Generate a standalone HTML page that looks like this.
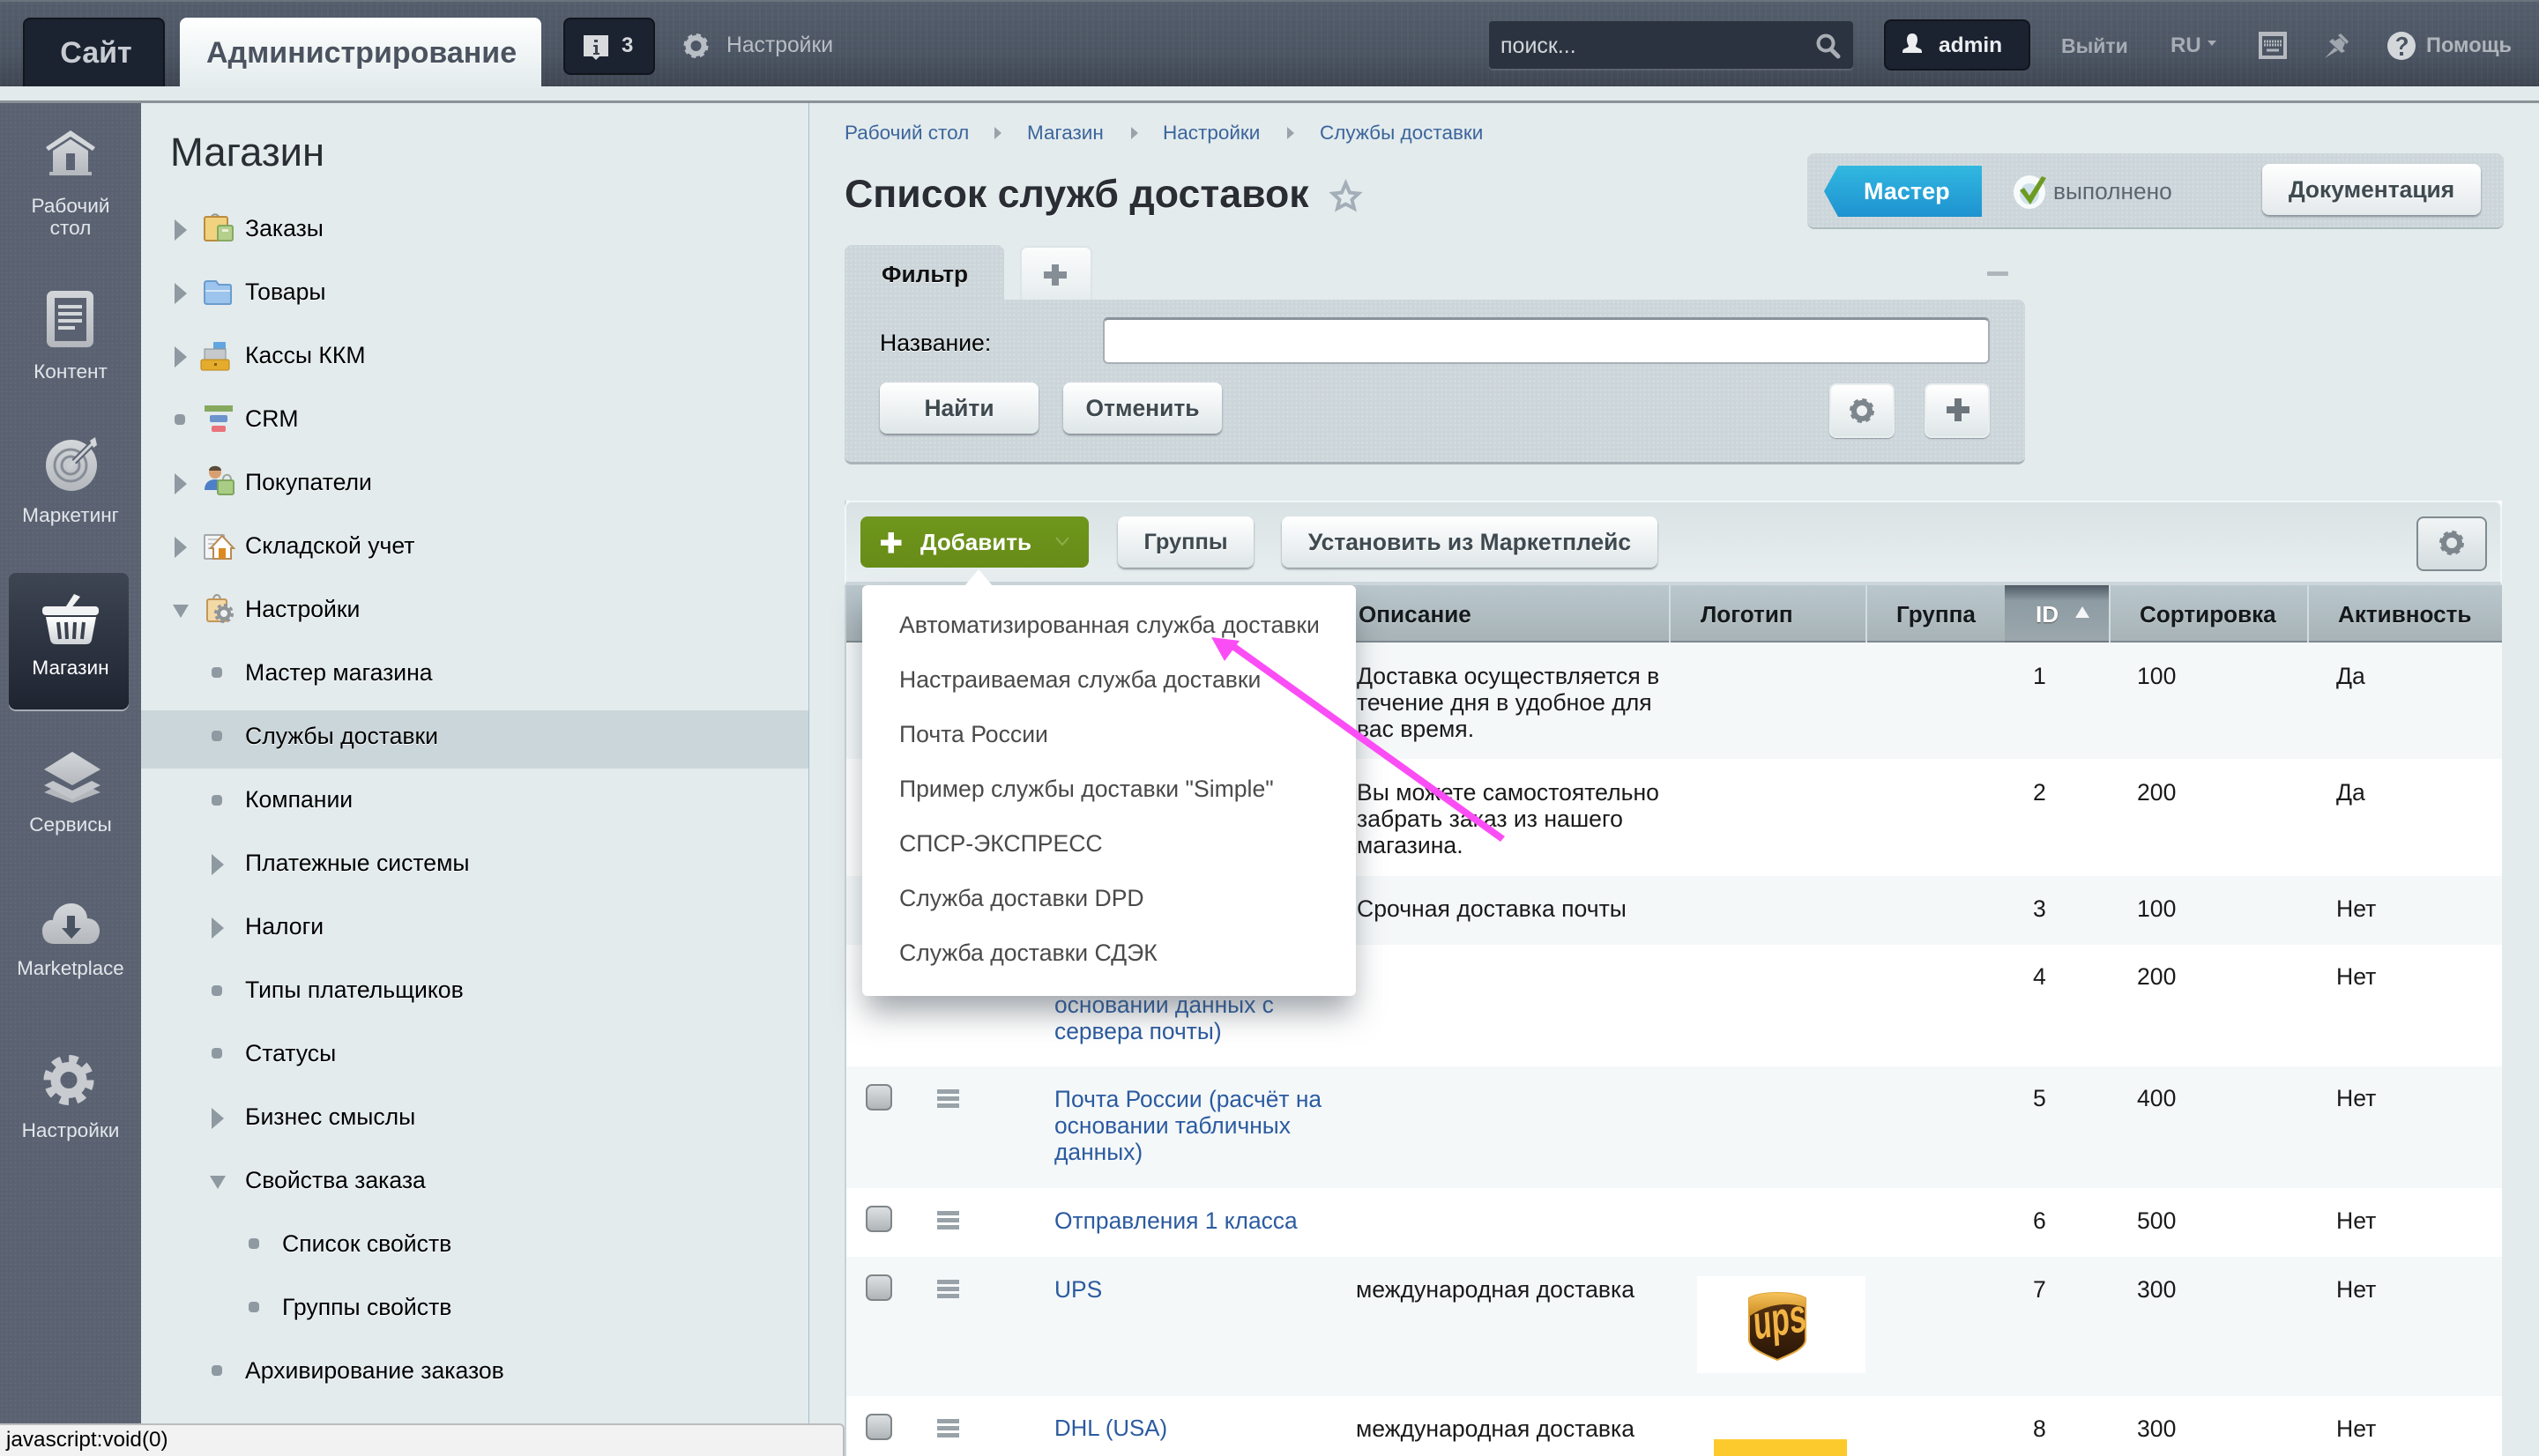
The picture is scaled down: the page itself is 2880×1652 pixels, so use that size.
<!DOCTYPE html>
<html lang="ru"><head><meta charset="utf-8"><title>Список служб доставок</title>
<style>
html,body{margin:0;padding:0;width:2880px;height:1652px;overflow:hidden;background:#e3ebed}
body{position:relative;font-family:"Liberation Sans",Arial,sans-serif;font-size:26.600px;color:#000}
.a,.t,.b{position:absolute}
.t{white-space:nowrap;line-height:30px}
.b{box-sizing:border-box;text-align:center;font-weight:bold;font-size:26.400px;color:#3f4a50;background:linear-gradient(#fff,#dfe6e8);border-radius:8px;box-shadow:0 2px 2px rgba(60,70,80,.5);text-shadow:0 1px 0 #fff}
.dots{background-color:#ccd6da;background-image:radial-gradient(rgba(255,255,255,.22) 1px,transparent 1.3px);background-size:5px 5px}
.m{text-shadow:0 1px 0 #fff;color:#000}
.s{color:#e3e6ea;font-size:22.600px;width:160px;left:0;text-align:center;line-height:25px}
.top{color:#b9bec5;font-size:24.700px}
.r{color:#1a1a1a}
.l{color:#2b5ba0;font-size:26.400px}
.h{font-weight:bold;font-size:26.100px;color:#15191c;text-shadow:0 1px 0 rgba(255,255,255,.35)}
.d{color:#4a4a4a;left:1020px}
.bc{color:#3c659c;font-size:22.500px}
</style></head><body>

<!-- top bar -->
<div class="a" style="left:0;top:0;width:2880px;height:98px;background:repeating-linear-gradient(90deg,rgba(255,255,255,.025) 0 2px,transparent 2px 7px),repeating-linear-gradient(0deg,rgba(0,0,0,.025) 0 2px,transparent 2px 6px),linear-gradient(#555e6c,#4d5664 60%,#3f4753);border-top:2px solid #6a727d;box-sizing:border-box"></div>
<div class="a" style="left:0;top:98px;width:2880px;height:16px;background:#e2eaec;border-bottom:3px solid #8b9297;box-sizing:content-box"></div>

<div class="a" style="left:26px;top:20px;width:161px;height:78px;background:#1b2230;border:2px solid #11151d;border-bottom:0;box-sizing:border-box;border-radius:8px 8px 0 0"></div>
<div class="a" style="left:204px;top:20px;width:410px;height:81px;background:linear-gradient(#fff,#e3ebed);border-radius:8px 8px 0 0"></div>
<div class="a" style="left:639px;top:20px;width:104px;height:65px;background:#1b2230;border:2px solid #11151d;box-sizing:border-box;border-radius:8px"></div>
<div class="a" style="left:1689px;top:24px;width:413px;height:54px;background:#2c3340;border-radius:4px;box-shadow:0 2px 0 rgba(255,255,255,.12)"></div>
<div class="a" style="left:2137px;top:22px;width:166px;height:58px;background:#1b2230;border:2px solid #11151d;box-sizing:border-box;border-radius:8px"></div>

<!-- left rail -->
<div class="a dots" style="left:0;top:117px;width:160px;height:1535px;background-color:#5a6272;background-image:radial-gradient(rgba(255,255,255,.05) 1px,transparent 1.3px)"></div>
<div class="a" style="left:10px;top:650px;width:136px;height:155px;background:linear-gradient(#3e4553,#1e2430);border-radius:8px;box-shadow:0 2px 0 #a8aeb6"></div>
<!-- submenu -->
<div class="a" style="left:917px;top:117px;width:1px;height:1500px;background:#a9bdd0"></div>
<div class="a" style="left:160px;top:806px;width:757px;height:66px;background:#cbd6db"></div>

<!-- filter + master -->
<div class="a dots" style="left:2050px;top:174px;width:790px;height:86px;border-radius:8px;border-bottom:2px solid #b0bbc0;box-sizing:border-box"></div>
<div class="a dots" style="left:958px;top:278px;width:181px;height:63px;border-radius:8px 8px 0 0"></div>
<div class="a" style="left:1157px;top:279px;width:82px;height:61px;background:linear-gradient(#fbfcfc,#e6ecee);border:2px solid #dde4e7;border-bottom:0;box-sizing:border-box;border-radius:8px 8px 0 0"></div>
<div class="a dots" style="left:958px;top:340px;width:1339px;height:187px;border-radius:0 8px 8px 8px;border-bottom:3px solid #a9b4b9;box-sizing:border-box"></div>
<div class="a" style="left:1251px;top:360px;width:1006px;height:53px;background:#fff;border:2px solid #a7afb5;border-top:3px solid #8a929a;box-sizing:border-box;border-radius:6px"></div>

<div class="b" style="left:998px;top:434px;width:180px;height:58px;line-height:58px">Найти</div>
<div class="b" style="left:1206px;top:434px;width:180px;height:58px;line-height:58px">Отменить</div>
<div class="b" style="left:2075px;top:435px;width:74px;height:62px;border:2px solid #e8edef;box-shadow:0 1px 1px rgba(60,70,80,.45)"></div>
<div class="b" style="left:2183px;top:435px;width:74px;height:62px;border:2px solid #e8edef;box-shadow:0 1px 1px rgba(60,70,80,.45)"></div>
<div class="a" style="left:2254px;top:308px;width:24px;height:5px;background:#aeb6bb;border-radius:1px"></div>

<svg class="a" style="left:2069px;top:188px" width="179" height="58"><defs><linearGradient id="bl" x1="0" y1="0" x2="0" y2="1"><stop offset="0" stop-color="#31b8e0"/><stop offset="1" stop-color="#1e92d0"/></linearGradient></defs><path d="M16 0H179V58H16L0 29Z" fill="url(#bl)"/></svg>
<div class="b" style="left:2566px;top:186px;width:248px;height:58px;line-height:58px;background:linear-gradient(#fff,#e4e9eb)">Документация</div>

<!-- list panel -->
<div class="a" style="left:958px;top:568px;width:1880px;height:1084px;background:#fff;border-left:2px solid #c9d3d7;box-sizing:border-box"></div>
<div class="a" style="left:958px;top:568px;width:1880px;height:96px;background:linear-gradient(#d9e2e4,#e9eff1);border-radius:8px 8px 0 0;border:2px solid #f2f6f7;border-bottom:4px solid #cdd7db;box-sizing:border-box"></div>
<div class="a" style="left:960px;top:664px;width:1878px;height:65px;background:linear-gradient(#bac7cd,#a7b3b6);border-bottom:2px solid #7e8a90;box-sizing:border-box"></div>
<div class="a" style="left:1893px;top:664px;width:2px;height:65px;background:#d3dce0"></div>
<div class="a" style="left:2116px;top:664px;width:2px;height:65px;background:#d3dce0"></div>
<div class="a" style="left:2274px;top:664px;width:118px;height:65px;background:linear-gradient(#4f5a64,#8d9ba3 28%,#9ba7ac);border-bottom:2px solid #6e7a80;box-sizing:border-box"></div>
<div class="a" style="left:2392px;top:664px;width:2px;height:65px;background:#d3dce0"></div>
<div class="a" style="left:2617px;top:664px;width:2px;height:65px;background:#d3dce0"></div>
<div class="a" style="left:960px;top:729px;width:1878px;height:132px;background:#f5f8f9"></div>
<div class="a" style="left:960px;top:994px;width:1878px;height:78px;background:#f5f8f9"></div>
<div class="a" style="left:960px;top:1210px;width:1878px;height:138px;background:#f5f8f9"></div>
<div class="a" style="left:960px;top:1426px;width:1878px;height:158px;background:#f5f8f9"></div>
<div class="a" style="left:1925px;top:1448px;width:191px;height:110px;background:#fff"></div>
<div class="a" style="left:1944px;top:1633px;width:151px;height:19px;background:#fdca2e"></div>

<div class="a" style="left:976px;top:586px;width:259px;height:58px;background:linear-gradient(#6f961c,#678c18);border-radius:8px"></div>
<div class="b" style="left:1268px;top:586px;width:154px;height:58px;line-height:58px;font-size:25.400px">Группы</div>
<div class="b" style="left:1454px;top:586px;width:426px;height:58px;line-height:58px">Установить из Маркетплейс</div>
<div class="b" style="left:2741px;top:586px;width:80px;height:62px;border:2px solid #7f8b90;background:linear-gradient(#f1f4f5,#d5dde0);box-shadow:none"></div>

<!-- icon layer -->
<svg class="a" style="left:0;top:0" width="2880" height="1652" viewBox="0 0 2880 1652">
<defs>
<linearGradient id="g" x1="0" y1="0" x2="0" y2="1"><stop offset="0" stop-color="#d4d7da"/><stop offset="1" stop-color="#b4b8bd"/></linearGradient>
<linearGradient id="gw" x1="0" y1="0" x2="0" y2="1"><stop offset="0" stop-color="#fff"/><stop offset="1" stop-color="#cfd3d6"/></linearGradient>
<linearGradient id="cb" x1="0" y1="0" x2="0" y2="1"><stop offset="0" stop-color="#dfe2e4"/><stop offset="1" stop-color="#aeb3b6"/></linearGradient>
<linearGradient id="ups" x1="0" y1="0" x2="0" y2="1"><stop offset="0" stop-color="#5a3414"/><stop offset="1" stop-color="#2a1606"/></linearGradient>
<linearGradient id="upsg" x1="0" y1="0" x2="0" y2="1"><stop offset="0" stop-color="#f6c25a"/><stop offset="1" stop-color="#c98a20"/></linearGradient>
<g id="cbx"><rect x="1" y="1" width="28" height="28" rx="6" fill="url(#cb)" stroke="#7f8589" stroke-width="2"/></g>
<g id="drag" fill="#98a2a8"><rect width="25" height="5" y="0"/><rect width="25" height="5" y="8"/><rect width="25" height="5" y="16"/></g>
<path id="ar" d="M0-12L14 0L0 12Z" fill="#8f99a1"/>
<path id="ad" d="M-9 0H9L0 15Z" fill="#8f99a1"/>
<rect id="dt" x="0" y="-6" width="12" height="12" rx="4" fill="#8f99a1"/>
</defs>

<!-- top icons -->
<path d="M662 40h28v24h-10l-4 4-4-4h-10z" fill="#d8dadd"/><path d="M674 45h4v3h-4zM673 51h5v9h2v2h-7v-2h2v-7h-2z" fill="#3c4350"/>
<g transform="translate(789.500 52)"><circle r="9" fill="none" stroke="#b9bec5" stroke-width="6"/><circle r="12" fill="none" stroke="#b9bec5" stroke-width="4" stroke-dasharray="5 4.400"/></g>
<g fill="none" stroke="#a9aeb5"><circle cx="2071" cy="49" r="8.500" stroke-width="4"/><path d="M2077 56l8 8" stroke-width="5" stroke-linecap="round"/></g>
<path d="M2169 38c4 0 6 3 6 7 0 3-1 5-2 7 0 2 3 2 6 4 1 1 1 3 1 4h-22c0-1 0-3 1-4 3-2 6-2 6-4-1-2-2-4-2-7 0-4 2-7 6-7z" fill="#eceef0"/>
<path d="M2504 46h10l-5 6z" fill="#a7adb5"/>
<rect x="2562" y="36" width="32" height="31" fill="#b6babf"/><rect x="2566" y="41" width="24" height="22" fill="#4b5462"/><path d="M2568 47h20M2568 51h20" stroke="#b0b6bc" stroke-width="3" stroke-dasharray="2 1" fill="none"/><path d="M2571 57h14" stroke="#b0b6bc" stroke-width="3" fill="none"/>
<path d="M2652 40L2655 38 2664 47 2662 50ZM2654 43L2660 49 2656 58 2646 48Z" fill="#a0a6ad"/><path d="M2642 47L2646 44 2660 58 2656 60ZM2648 54L2637 66 2652 57Z" fill="#a0a6ad"/>
<circle cx="2724" cy="52" r="16" fill="#d3d7da"/><path d="M2718 47c1-7 13-7 13 0 0 5-6 4-6 9h-3c0-6 5-5 5-9 0-3-5-3-6 0zM2722 59h4v4h-4z" fill="#4a5361"/>

<!-- rail icons -->
<path d="M80 148L108 167 105 171 80 155 55 171 52 167Z" fill="#d4d7da"/><path d="M80 158L100 171V195H104V199H56V195H60V171ZM75 174V193H85V174Z" fill="url(#g)" fill-rule="evenodd"/>
<rect x="53" y="330" width="53" height="64" rx="7" fill="url(#g)"/><rect x="62" y="338" width="36" height="49" fill="#5a6272"/><path d="M66 346h27v4H66zM66 354h27v4H66zM66 362h27v4H66zM66 370h19v4H66z" fill="#d4d7da"/>
<circle cx="81" cy="528" r="29" fill="url(#g)"/><g fill="none" stroke="#868d96" stroke-width="3"><circle cx="80" cy="528" r="18"/><circle cx="80" cy="528" r="10"/></g><circle cx="80" cy="528" r="5" fill="#c8cbcf"/><path d="M84 524L108 500" stroke="#5a6272" stroke-width="7" fill="none"/><path d="M80 528L106 502" stroke="#cfd2d5" stroke-width="3" fill="none"/><path d="M102 500L108 496 110 505 106 508Z" fill="#d4d7da"/>
<path d="M84 674l7 3-11 14h-7z" fill="#f1f2f3"/><rect x="48" y="688" width="64" height="10" rx="4" fill="#f1f2f3"/><path d="M52 700H109L104 726Q103 731 97 731H64Q58 731 57 726Z" fill="url(#gw)"/><path d="M66 706l2 19M75 706l1 19M85 706l-1 19M95 706l-2 19" stroke="#3a414e" stroke-width="4" fill="none"/>
<path d="M82 883L114 899 82 911 50 899Z" fill="#b4b8bd"/><path d="M50 889L82 871 114 889 82 905Z" fill="#5a6272"/><path d="M82 875L114 891 82 907 50 891Z" fill="#c2c5c9"/><path d="M50 881L82 863 114 881 82 897Z" fill="#5a6272"/><path d="M82 853L114 873 82 891 50 873Z" fill="url(#g)"/>
<path d="M62 1071C50 1071 48 1062 48 1056 48 1048 54 1043 60 1044 61 1033 70 1025 81 1025 92 1025 99 1034 99 1042 108 1042 113 1049 113 1056 113 1064 108 1071 100 1071Z" fill="url(#g)"/><path d="M76 1039h9v14h7l-11 12-11-12h6z" fill="#4a5362"/>
<g transform="translate(78 1225.500)"><circle r="15" fill="none" stroke="#c8cbcf" stroke-width="11"/><circle r="24" fill="none" stroke="#c8cbcf" stroke-width="9" stroke-dasharray="10 8.850"/></g>

<!-- menu colour icons -->
<path d="M239 250c0-9 10-9 10 0" fill="none" stroke="#9a9a92" stroke-width="2"/><rect x="232" y="246" width="26" height="27" rx="2" fill="#f1d27e" stroke="#bb8d3e" stroke-width="2"/><rect x="247" y="256" width="17" height="17" rx="2" fill="#b4d08c" stroke="#86a862" stroke-width="2"/><rect x="252" y="260" width="7" height="3" fill="#e9f0d8"/>
<path d="M232 322q0-3 3-3h10l3 4h12q2 0 2 2v18q0 2-2 2h-25q-3 0-3-3z" fill="#9cc4ec" stroke="#6b9ccf" stroke-width="2"/><path d="M233 330h28" stroke="#d4e6f8" stroke-width="2"/>
<rect x="242" y="388" width="14" height="8" rx="1" fill="#62a5e0"/><rect x="232" y="396" width="24" height="13" fill="#c6c9cc" stroke="#8a8d90"/><rect x="228" y="408" width="32" height="12" rx="2" fill="#e5ab2c" stroke="#b98518"/><rect x="243" y="412" width="3" height="3" fill="#8a6010"/>
<rect x="232" y="460" width="32" height="7" fill="#87a95e"/><rect x="238" y="471" width="20" height="8" rx="2" fill="#6c93cc"/><rect x="240" y="483" width="16" height="7" rx="2" fill="#e9737b"/>
<circle cx="244" cy="536" r="7" fill="#d8a070"/><path d="M237 534c0-7 14-7 14 0z" fill="#5c4a3a"/><path d="M232 556c0-9 6-12 12-12s8 3 10 6v6z" fill="#4d7fc8"/><path d="M253 544c0-7 9-7 9 0" fill="none" stroke="#a0a89a" stroke-width="2"/><rect x="247" y="545" width="18" height="16" rx="2" fill="#a9cd84" stroke="#7fa55c" stroke-width="2"/>
<rect x="232" y="607" width="22" height="27" rx="1" fill="#f4f5f6" stroke="#a5a9ac" stroke-width="2"/><path d="M236 612h12M236 617h8M236 622h8" stroke="#b9bdc0" stroke-width="1.500"/><path d="M252 608L265 622H262V634H242V622H239Z" fill="#fff" stroke="#b98a52" stroke-width="2"/><rect x="248" y="622" width="8" height="12" fill="#dc8a1e"/>
<path d="M242 681c0-8 8-8 8 0" fill="none" stroke="#9a9a92" stroke-width="2"/><rect x="235" y="680" width="22" height="25" rx="2" fill="#f2d9a6" stroke="#c4965a" stroke-width="2"/><g transform="translate(254 696)"><circle r="6" fill="#eef0f1" stroke="#8f9498" stroke-width="4"/><circle r="9.500" fill="none" stroke="#8f9498" stroke-width="3" stroke-dasharray="4 3.400"/></g>

<!-- arrows & dots -->
<use href="#ar" x="198" y="261"/><use href="#ar" x="198" y="333"/><use href="#ar" x="198" y="405"/><use href="#dt" x="198" y="476"/><use href="#ar" x="198" y="549"/><use href="#ar" x="198" y="621"/><use href="#ad" x="205" y="686"/>
<use href="#dt" x="240" y="763"/><use href="#dt" x="240" y="835"/><use href="#dt" x="240" y="908"/><use href="#ar" x="240" y="981"/><use href="#ar" x="240" y="1053"/><use href="#dt" x="240" y="1124"/><use href="#dt" x="240" y="1195"/><use href="#ar" x="240" y="1269"/><use href="#ad" x="247" y="1334"/><use href="#dt" x="282" y="1411"/><use href="#dt" x="282" y="1483"/><use href="#dt" x="240" y="1555"/>

<!-- breadcrumbs arrows -->
<path d="M1128 144l8 7-8 7zM1283 144l8 7-8 7zM1460 144l8 7-8 7z" fill="#9aa3aa"/>
<!-- star -->
<path d="M1526.500 208L1531 218.500 1541 219.500 1533.500 226.500 1536 236.500 1526.500 231.500 1517 236.500 1519.500 226.500 1512 219.500 1522 218.500Z" fill="none" stroke="#a3aeb8" stroke-width="4"/>
<!-- plus icons -->
<path d="M1193 300h8v8h9v8h-9v8h-8v-8h-9v-8h9z" fill="#858e95"/>
<path d="M2217 452h8v9h9v8h-9v9h-8v-9h-9v-8h9z" fill="#6d767d"/>
<g transform="translate(2112 466)"><circle r="9" fill="none" stroke="#7d868c" stroke-width="6"/><circle r="12" fill="none" stroke="#7d868c" stroke-width="4" stroke-dasharray="5 4.400"/></g>
<g transform="translate(2781 616)"><circle r="9" fill="none" stroke="#7d868c" stroke-width="6"/><circle r="12" fill="none" stroke="#7d868c" stroke-width="4" stroke-dasharray="5 4.400"/></g>
<path d="M2354 700l8-13 8 13z" fill="#f4f6f7" transform="translate(0 1)"/>
<!-- check -->
<ellipse cx="2302" cy="218" rx="18" ry="19" fill="#f8fbfb"/><ellipse cx="2302" cy="220" rx="11" ry="12" fill="#cfe2ec"/><path d="M2291 216l5-3 6 9 14-22 5 2-18 30z" fill="#6d9b22"/>
<!-- add -->
<path d="M1007.500 604h6.500v8.500h8.500v6.500h-8.500v8.500h-6.500v-8.500H999v-6.500h8.500z" fill="#fff"/><path d="M1198 610l7 8 7-8" fill="none" stroke="#8fae4c" stroke-width="2"/>
<!-- checkboxes -->
<use href="#cbx" x="982" y="1230"/><use href="#cbx" x="982" y="1368"/><use href="#cbx" x="982" y="1446"/><use href="#cbx" x="982" y="1604"/>
<use href="#drag" x="1063" y="1236"/><use href="#drag" x="1063" y="1374"/><use href="#drag" x="1063" y="1452"/><use href="#drag" x="1063" y="1610"/>
<!-- ups -->
<path d="M1984 1473C1996 1465 2036 1465 2048 1473V1520C2048 1530 2030 1537 2016 1543 2002 1537 1984 1530 1984 1520Z" fill="url(#ups)" stroke="#e0a43a" stroke-width="2"/>
<path d="M1984 1473C1996 1465 2036 1465 2048 1473V1484C2030 1476 2002 1480 1984 1494Z" fill="url(#upsg)"/>
</svg>

<!-- top text -->
<div class="t" style="left:2px;top:45px;width:214px;text-align:center;font-size:34px;font-weight:bold;color:#c8ccd2">Сайт</div>
<div class="t" style="left:234px;top:45px;font-size:34px;font-weight:bold;color:#4b5360;text-shadow:0 1px 0 #fff">Администрирование</div>
<div class="t" style="left:705px;top:37px;font-weight:bold;color:#d4d7da;font-size:24px">3</div>
<div class="t top" style="left:824px;top:37px">Настройки</div>
<div class="t" style="left:1702px;top:37px;color:#d4d7da;font-size:25px">поиск...</div>
<div class="t" style="left:2199px;top:37px;color:#eceef0;font-weight:bold;font-size:24.500px">admin</div>
<div class="t top" style="left:2338px;top:37px;font-weight:bold;color:#a7adb5;font-size:23px">Выйти</div>
<div class="t top" style="left:2462px;top:37px;font-weight:bold;color:#a7adb5;font-size:24px">RU</div>
<div class="t top" style="left:2752px;top:37px;font-weight:bold;color:#b0b5bb;font-size:23.600px">Помощь</div>

<!-- rail text -->
<div class="t s" style="top:221px">Рабочий<br>стол</div>
<div class="t s" style="top:409px">Контент</div>
<div class="t s" style="top:572px">Маркетинг</div>
<div class="t s" style="top:745px;color:#fff">Магазин</div>
<div class="t s" style="top:923px">Сервисы</div>
<div class="t s" style="top:1086px;font-size:22.300px">Marketplace</div>
<div class="t s" style="top:1270px">Настройки</div>

<!-- submenu text -->
<div class="t" style="left:193px;top:158px;font-size:45.400px;color:#2a2e34">Магазин</div>
<div class="t m" style="left:278px;top:244px">Заказы</div>
<div class="t m" style="left:278px;top:316px">Товары</div>
<div class="t m" style="left:278px;top:388px">Кассы ККМ</div>
<div class="t m" style="left:278px;top:460px">CRM</div>
<div class="t m" style="left:278px;top:532px">Покупатели</div>
<div class="t m" style="left:278px;top:604px">Складской учет</div>
<div class="t m" style="left:278px;top:676px">Настройки</div>
<div class="t m" style="left:278px;top:748px">Мастер магазина</div>
<div class="t m" style="left:278px;top:820px">Службы доставки</div>
<div class="t m" style="left:278px;top:892px">Компании</div>
<div class="t m" style="left:278px;top:964px">Платежные системы</div>
<div class="t m" style="left:278px;top:1036px">Налоги</div>
<div class="t m" style="left:278px;top:1108px">Типы плательщиков</div>
<div class="t m" style="left:278px;top:1180px">Статусы</div>
<div class="t m" style="left:278px;top:1252px">Бизнес смыслы</div>
<div class="t m" style="left:278px;top:1324px">Свойства заказа</div>
<div class="t m" style="left:320px;top:1396px">Список свойств</div>
<div class="t m" style="left:320px;top:1468px">Группы свойств</div>
<div class="t m" style="left:278px;top:1540px">Архивирование заказов</div>

<!-- breadcrumbs, title -->
<div class="t bc" style="left:958px;top:136px">Рабочий стол</div>
<div class="t bc" style="left:1165px;top:136px">Магазин</div>
<div class="t bc" style="left:1319px;top:136px">Настройки</div>
<div class="t bc" style="left:1497px;top:136px">Службы доставки</div>
<div class="t" style="left:958px;top:201px;font-size:44.700px;line-height:40px;font-weight:bold;color:#2a2e34;text-shadow:0 1px 0 #fff">Список служб доставок</div>

<div class="t" style="left:2114px;top:202px;font-weight:bold;color:#fff;font-size:27px">Мастер</div>
<div class="t" style="left:2329px;top:202px;color:#5d656e;font-size:26.300px">выполнено</div>

<div class="t" style="left:1000px;top:296px;font-weight:bold;color:#111;text-shadow:0 1px 0 #fff;font-size:26.300px">Фильтр</div>
<div class="t m" style="left:998px;top:374px">Название:</div>

<div class="t" style="left:1044px;top:600px;font-weight:bold;color:#fff;font-size:26px">Добавить</div>

<!-- header text -->
<div class="t h" style="left:1541px;top:682px">Описание</div>
<div class="t h" style="left:1929px;top:682px">Логотип</div>
<div class="t h" style="left:2151px;top:682px">Группа</div>
<div class="t h" style="left:2309px;top:682px;color:#fff;text-shadow:0 1px 1px #555">ID</div>
<div class="t h" style="left:2427px;top:682px">Сортировка</div>
<div class="t h" style="left:2652px;top:682px">Активность</div>

<!-- rows -->
<div class="t r" style="left:1539px;top:752px;line-height:30px">Доставка осуществляется в<br>течение дня в удобное для<br>вас время.</div>
<div class="t r" style="left:1539px;top:884px;line-height:30px">Вы можете самостоятельно<br>забрать заказ из нашего<br>магазина.</div>
<div class="t r" style="left:1539px;top:1016px">Срочная доставка почты</div>
<div class="t l" style="left:1196px;top:1095px;line-height:30px">Почта России (расчёт на<br>основании данных с<br>сервера почты)</div>
<div class="t l" style="left:1196px;top:1232px;line-height:30px">Почта России (расчёт на<br>основании табличных<br>данных)</div>
<div class="t l" style="left:1196px;top:1370px">Отправления 1 класса</div>
<div class="t l" style="left:1196px;top:1448px">UPS</div>
<div class="t l" style="left:1196px;top:1606px;font-size:25.800px">DHL (USA)</div>
<div class="t r" style="left:1538px;top:1448px">международная доставка</div>
<div class="t r" style="left:1538px;top:1606px">международная доставка</div>

<div class="t r" style="left:2306px;top:752px">1</div><div class="t r" style="left:2424px;top:752px">100</div><div class="t r" style="left:2650px;top:752px">Да</div>
<div class="t r" style="left:2306px;top:884px">2</div><div class="t r" style="left:2424px;top:884px">200</div><div class="t r" style="left:2650px;top:884px">Да</div>
<div class="t r" style="left:2306px;top:1016px">3</div><div class="t r" style="left:2424px;top:1016px">100</div><div class="t r" style="left:2650px;top:1016px">Нет</div>
<div class="t r" style="left:2306px;top:1093px">4</div><div class="t r" style="left:2424px;top:1093px">200</div><div class="t r" style="left:2650px;top:1093px">Нет</div>
<div class="t r" style="left:2306px;top:1231px">5</div><div class="t r" style="left:2424px;top:1231px">400</div><div class="t r" style="left:2650px;top:1231px">Нет</div>
<div class="t r" style="left:2306px;top:1370px">6</div><div class="t r" style="left:2424px;top:1370px">500</div><div class="t r" style="left:2650px;top:1370px">Нет</div>
<div class="t r" style="left:2306px;top:1448px">7</div><div class="t r" style="left:2424px;top:1448px">300</div><div class="t r" style="left:2650px;top:1448px">Нет</div>
<div class="t r" style="left:2306px;top:1606px">8</div><div class="t r" style="left:2424px;top:1606px">300</div><div class="t r" style="left:2650px;top:1606px">Нет</div>

<div class="t" style="left:1989px;top:1477px;font-size:54px;line-height:50px;font-weight:bold;color:#f2b544;transform:scaleX(.62) rotate(-6deg);transform-origin:0 50%">ups</div>

<!-- dropdown -->
<div class="a" style="left:978px;top:664px;width:560px;height:466px;background:#fff;border-radius:6px;box-shadow:0 22px 34px -4px rgba(70,80,90,.5)"></div>
<svg class="a" style="left:1090px;top:646px" width="40" height="19"><path d="M4 19L20 0 36 19Z" fill="#fff"/></svg>
<div class="t d" style="top:694px">Автоматизированная служба доставки</div>
<div class="t d" style="top:756px">Настраиваемая служба доставки</div>
<div class="t d" style="top:818px">Почта России</div>
<div class="t d" style="top:880px">Пример службы доставки "Simple"</div>
<div class="t d" style="top:942px">СПСР-ЭКСПРЕСС</div>
<div class="t d" style="top:1004px">Служба доставки DPD</div>
<div class="t d" style="top:1066px">Служба доставки СДЭК</div>

<!-- pink arrow -->
<svg class="a" style="left:0;top:0" width="2880" height="1652"><path d="M1374 723L1406 727 1389 750Z" fill="#fb4df5"/><path d="M1393 734L1401 730 1707 949 1702 955Z" fill="#fb4df5"/></svg>

<!-- status bar -->
<div class="a" style="left:0;top:1615px;width:958px;height:37px;background:#f2f2f2;border-top:2px solid #bcbcbc;border-right:2px solid #bcbcbc;border-radius:0 6px 0 0;box-sizing:border-box"></div>
<div class="t" style="left:7px;top:1619px;font-size:24.300px;color:#000">javascript:void(0)</div>
</body></html>
